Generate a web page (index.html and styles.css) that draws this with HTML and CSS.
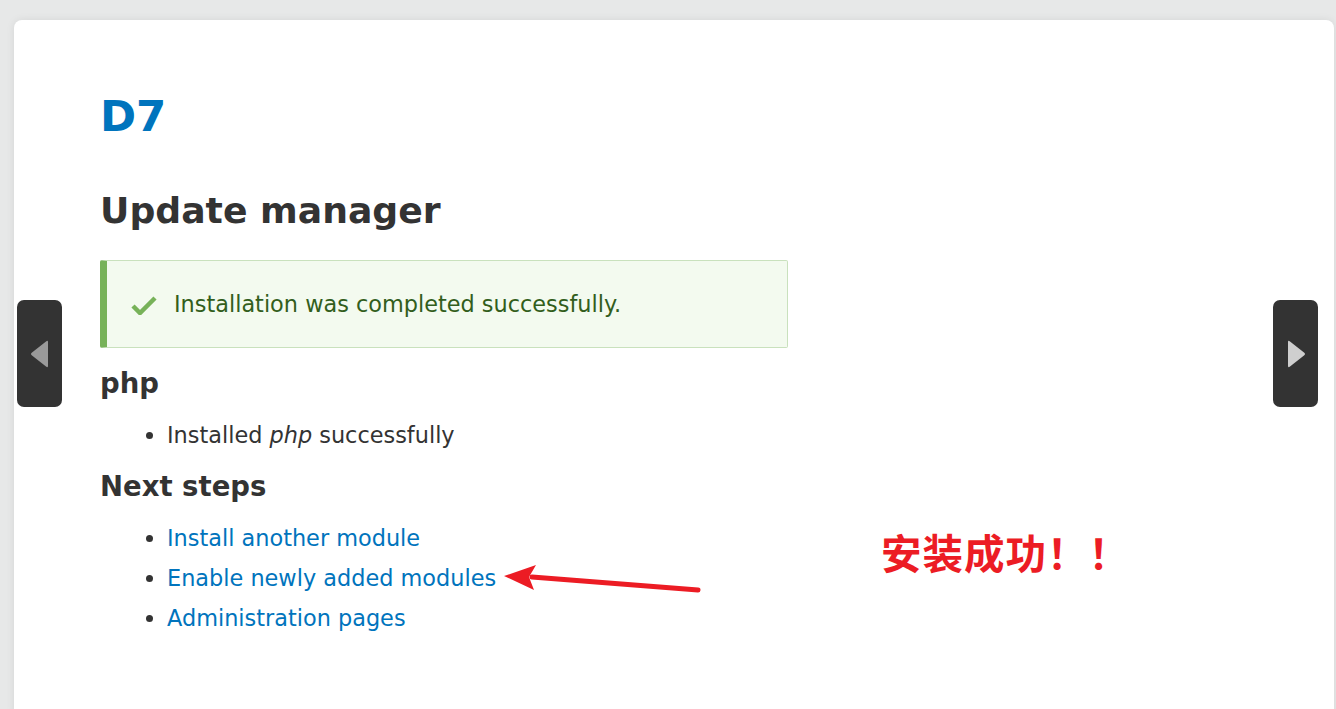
FILE: index.html
```html
<!DOCTYPE html>
<html>
<head>
<meta charset="utf-8">
<link rel="stylesheet" href="styles.css">
</head>
<body>
<div class="card">
  <h1 class="site">D7</h1>
  <h2 class="title">Update manager</h2>
  <div class="msg">
    <svg class="check" width="26" height="20" viewBox="0 0 26 20"><path d="M2 11 L9 18 L24 3" fill="none" stroke="#77b259" stroke-width="4.5"/></svg>
    <span>Installation was completed successfully.</span>
  </div>
  <h3 class="sub">php</h3>
  <ul class="list">
    <li>Installed <em>php</em> successfully</li>
  </ul>
  <h3 class="sub next-steps">Next steps</h3>
  <ul class="list links">
    <li><a href="#">Install another module</a></li>
    <li><a href="#">Enable newly added modules</a></li>
    <li><a href="#">Administration pages</a></li>
  </ul>
  <div class="note">安装成功！！</div>
  <svg class="arrow" width="220" height="40" viewBox="0 0 220 40"><path d="M196 22 L30 9" stroke="#ec1c24" stroke-width="5" stroke-linecap="round"/><path d="M2 8 L34 -3 L27 9 L32 22 Z" fill="#ec1c24"/></svg>
</div>
<div class="nav prev"><svg width="24" height="30" viewBox="0 0 24 30"><path d="M20 3 L20 27 Q20 29 18 27.5 L4 16.5 Q2 15 4 13.5 L18 2.5 Q20 1 20 3 Z" fill="#9a9a9a"/></svg></div>
<div class="nav next"><svg width="24" height="30" viewBox="0 0 24 30"><path d="M4 3 L4 27 Q4 29 6 27.5 L20 16.5 Q22 15 20 13.5 L6 2.5 Q4 1 4 3 Z" fill="#cfcfcf"/></svg></div>
</body>
</html>
```
FILE: styles.css
```css
html, body { margin: 0; padding: 0; }
body {
  background: #e7e8e8;
  font-family: "DejaVu Sans", sans-serif;
  color: #333;
  height: 709px;
  overflow: hidden;
}
.card {
  position: relative;
  margin: 20px 2px 0 14px;
  height: 700px;
  background: #fff;
  border-radius: 8px;
  box-shadow: 0 0 8px rgba(0,0,0,0.08);
  padding: 1px 0 0 86px;
  box-sizing: border-box;
}
.site {
  margin: 67px 0 0 0;
  font-size: 43.5px;
  line-height: 56px;
  color: #0074bd;
  font-weight: bold;
}
.title {
  margin: 45px 0 0 0;
  font-size: 36.2px;
  line-height: 44px;
  font-weight: bold;
  color: #333;
}
.msg {
  margin-top: 27px;
  width: 688px;
  height: 88px;
  box-sizing: border-box;
  background: #f3faef;
  border: 1px solid #c9e1bd;
  border-left: 7px solid #77b259;
  border-radius: 2px;
  display: flex;
  align-items: center;
  padding-left: 24px;
  color: #325e1c;
  font-size: 22.4px;
}
.check { margin-right: 17px; margin-top: 2px; }
.sub {
  margin: 18px 0 0 0;
  font-size: 27.5px;
  line-height: 34px;
  font-weight: bold;
  color: #333;
}
.sub.next-steps { margin-top: 14px; }
.list {
  margin: 15px 0 0 0;
  padding-left: 67px;
  font-size: 22.4px;
  line-height: 40px;
}
.list li { padding-left: 0; }
.links a { color: #0074bd; text-decoration: none; }
.note {
  position: absolute;
  left: 867px;
  top: 502px;
  font-family: "Noto Sans CJK SC", sans-serif;
  font-weight: bold;
  font-size: 40.5px;
  color: #ec1c24;
  letter-spacing: 1px;
}
.arrow {
  position: absolute;
  left: 488px;
  top: 548px;
  overflow: visible;
}
.nav {
  position: absolute;
  top: 300px;
  width: 45px;
  height: 107px;
  background: #333;
  border-radius: 7px;
  display: flex;
  align-items: center;
  justify-content: center;
}
.prev { left: 17px; }
.next { left: 1273px; }
```
